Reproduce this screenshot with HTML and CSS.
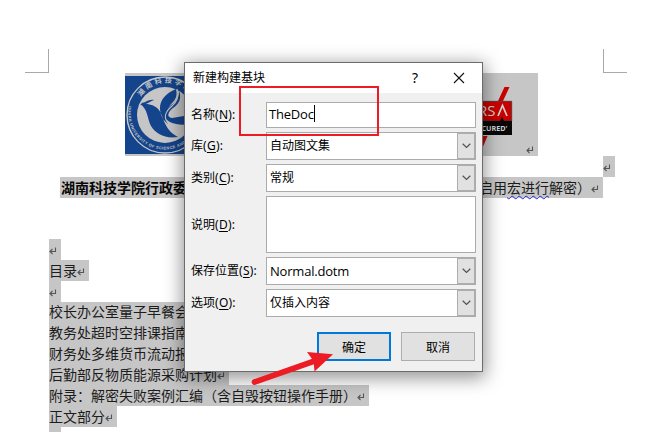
FILE: index.html
```html
<!DOCTYPE html>
<html lang="zh-CN">
<head>
<meta charset="utf-8">
<title>新建构建基块</title>
<link rel="stylesheet" href="styles.css">
</head>
<body>
<svg width="0" height="0" class="defs"><defs>
  <symbol id="ret" viewBox="0 0 8 8"><path d="M6.5 .5V4.5H1.5M3.5 2L1 4.500L3.5 7" fill="none" stroke="#555" stroke-width="1.100"/></symbol>
  <symbol id="chev" viewBox="0 0 9 6"><path d="M.7 .8L4.5 4.5L8.3 .8" fill="none" stroke="#505050" stroke-width="1.2"/></symbol>
</defs></svg>
<main class="page">
  <div class="corners"><i class="corner left"></i><i class="corner right"></i></div>
  <div class="logos">
    <svg class="seal" width="80" height="78" viewBox="125 76 80 78">
      <path fill="#14448b" d="M125 76h80v78h-80z"/>
      <circle cx="165" cy="115" r="38" fill="none" stroke="#c6c6c6" stroke-width="1.4"/>
      <circle cx="165" cy="115" r="28" fill="#c6c6c6"/>
      <path id="arcTop" d="M141 97A30 30 0 0 1 192 97" fill="none"/>
      <path id="arcBottom" d="M128.800 106A36.500 36.500 0 0 0 200 122" fill="none"/>
      <text class="seal-cn"><textPath href="#arcTop">湖南科技学院</textPath></text>
      <text class="seal-en"><textPath href="#arcBottom">HUNAN UNIVERSITY OF SCIENCE AND</textPath></text>
      <path fill="#14448b" d="M140 104C148 103 155 105 159 110C164 117 164 130 178 137C165 139 156 134 151 126C147 118 148 109 140 104zM141 103C146 103 148 99 154 100C149 102 147 104 143 105zM176 89C166 93 160 100 160 108C160 116 164 121 168 124C164 115 166 109 173 102C177 98 177 93 176 89z"/>
      <path fill="#14448b" d="M179 91C182 98 179 104 173 108C168 112 166 117 172 118L190 115L188 124C180 126 170 123 167 120C162 112 168 107 174 103C178 100 179 96 179 91z"/>
      <path d="M177 89C179 96 178 101 172 106C165 112 163 117 168 123" fill="none" stroke="#c6c6c6" stroke-width="1.2"/>
      <path d="M149 140q6 3 11 3m10 0q6 0 11-3M161 144h8" fill="none" stroke="#14448b" stroke-width=".9"/>
    </svg>
    <svg class="rsa" width="54" height="64" viewBox="460 86 54 64">
      <path fill="#c90000" d="M504.500 87h5L503 101h-5zM483 136h4.500L482 149h-5z"/>
      <path fill="#c90000" stroke="#333" stroke-width=".7" d="M461 101.300h50.700V121H461z"/>
      <path fill="#080808" d="M461 121h39l2-4 2 4h8v14h-51z"/>
      <text x="478" y="116" class="rsa-name">RS</text>
      <path d="M498 116L502.500 105.500L507 116" fill="none" stroke="#d0d0d0" stroke-width="1.700"/>
      <text x="473.500" y="130.800" class="rsa-sub">SECURED'</text>
    </svg>
    <svg class="ret"><use href="#ret"/></svg>
  </div>
  <div class="line tail"><svg class="ret"><use href="#ret"/></svg></div>
  <div class="line heading"><b>湖南科技学院行政委</b><span class="rest">启用<u>宏进行</u>解密）</span><svg class="ret"><use href="#ret"/></svg></div>
  <section class="body">
    <p class="line"><svg class="ret"><use href="#ret"/></svg></p>
    <p class="line">目录<svg class="ret"><use href="#ret"/></svg></p>
    <p class="line"><svg class="ret"><use href="#ret"/></svg></p>
    <p class="line">校长办公室量子早餐会<svg class="ret"><use href="#ret"/></svg></p>
    <p class="line">教务处超时空排课指南<svg class="ret"><use href="#ret"/></svg></p>
    <p class="line">财务处多维货币流动报<svg class="ret"><use href="#ret"/></svg></p>
    <p class="line">后勤部反物质能源采购计划<svg class="ret"><use href="#ret"/></svg></p>
    <p class="line">附录：解密失败案例汇编（含自毁按钮操作手册）<svg class="ret"><use href="#ret"/></svg></p>
    <p class="line">正文部分<svg class="ret"><use href="#ret"/></svg></p>
    <p class="line"><svg class="ret"><use href="#ret"/></svg></p>
  </section>
</main>

<div class="dialog">
  <header class="title"><span>新建构建基块</span><span class="help">?</span>
    <svg class="close" width="12" height="12" viewBox="0 0 12 12"><path d="M1 1L11 11M11 1L1 11" stroke="#111" stroke-width="1.100"/></svg>
  </header>
  <div class="form">
    <label>名称<span>(<u>N</u>):</span></label><div class="field name"><span class="typed">TheDoc</span><i class="caret"></i></div>
    <label>库<span>(<u>G</u>):</span></label><div class="field select"><span>自动图文集</span><i class="drop"><svg><use href="#chev"/></svg></i></div>
    <label>类别<span>(<u>C</u>):</span></label><div class="field select"><span>常规</span><i class="drop"><svg><use href="#chev"/></svg></i></div>
    <label>说明<span>(<u>D</u>):</span></label><div class="field"></div>
    <label>保存位置<span>(<u>S</u>):</span></label><div class="field select"><span class="latin">Normal.dotm</span><i class="drop"><svg><use href="#chev"/></svg></i></div>
    <label>选项<span>(<u>O</u>):</span></label><div class="field select"><span>仅插入内容</span><i class="drop"><svg><use href="#chev"/></svg></i></div>
  </div>
  <footer class="actions"><button class="primary">确定</button><button>取消</button></footer>
</div>
<div class="highlight"></div>
<svg class="arrow" width="86" height="40" viewBox="250 348 86 40"><path d="M254.500 382L316 360.500" stroke="#ed1c24" stroke-width="5.600" stroke-linecap="round"/><path fill="#ed1c24" d="M307 352L333 354.300L314.500 371.500L313.500 361z"/></svg>
</body>
</html>
```
FILE: styles.css
```css
* { box-sizing: border-box; }
body { margin: 0; width: 654px; height: 432px; overflow: hidden; position: relative; background: #fff; color: #000; font-family: "Noto Sans", "Noto Sans CJK SC", sans-serif; }
.defs { position: absolute; }
i { font-style: normal; }
.page { padding: 49px 27px 0 25px; height: 432px; overflow: hidden; font: 14px/21px "Noto Sans CJK SC", sans-serif; color: #1c1c1c; }
.corners { display: flex; justify-content: space-between; height: 24px; }
.corner { width: 24px; height: 24px; border-bottom: 1px solid #a9a9a9; }
.left { border-right: 1px solid #a9a9a9; }
.right { border-left: 1px solid #a9a9a9; }
.logos { display: flex; justify-content: space-between; margin-left: 100px; width: 413px; height: 83px; background: #c6c6c6; padding-top: 3px; }
.rsa { margin: 10px 0 0 auto; }
.logos .ret { align-self: flex-end; margin: 0 4px 2px 12px; }
.ret { width: 8px; height: 8px; flex: none; }
.seal-cn { font: bold 7px "Noto Sans CJK SC", sans-serif; fill: #c6c6c6; letter-spacing: 2.5px; }
.seal-en { font: bold 4px "Liberation Sans", sans-serif; fill: #c6c6c6; letter-spacing: .4px; }
.rsa-name { font: 15px "Open Sans", sans-serif; fill: #d0d0d0; }
.rsa-sub { font: bold 7.2px "Open Sans", sans-serif; fill: #d0d0d0; }
.line { display: flex; align-items: center; height: 21px; width: max-content; background: #c6c6c6; margin: 0; white-space: nowrap; }
.line .ret { margin: 3px 4px 0 0; }
.tail { margin-left: 578px; }
.heading { width: 543px; margin-left: 35px; padding-left: 1px; }
.heading b { font-weight: 700; color: #080808; }
.heading .rest { margin-left: auto; }
.rest u { text-decoration: underline wavy #2424e0 1px; text-underline-offset: 2px; }
.body { margin: 41px 0 0 24px; }
.body .line { height: 20.85px; }

.dialog { position: absolute; left: 184px; top: 62px; width: 299px; height: 310px; border: 1px solid #6b6b6b; background: #f0f0f0; box-shadow: 0 4px 17px 2px rgba(0,0,0,.42); font-size: 12px; }
.title { display: flex; align-items: center; height: 30px; padding: 0 17px 2px 8px; background: #fff; }
.help { margin-left: auto; font-size: 14px; }
.close { margin: 2px 0 0 35px; }
.form { display: grid; grid-template-columns: 75px 210px; grid-template-rows: 26px 28px 28px 57px 28px 28px; row-gap: 4px; padding: 9px 0 0 6px; }
.form label { align-self: center; white-space: nowrap; padding-bottom: 2px; }
.form label span { letter-spacing: .25px; }
.form label u { text-underline-offset: 2px; text-decoration-thickness: 1px; }
.field { display: flex; align-items: center; background: #fff; border: 1px solid #ababab; padding-left: 3px; line-height: 18px; }
.name { padding-left: 2px; }
.typed { font: 13px/18px "Open Sans", sans-serif; letter-spacing: -.2px; margin-top: -3px; }
.caret { width: 1px; height: 17px; background: #000; margin-top: -3px; }
.latin { font: 13px/18px "Open Sans", sans-serif; letter-spacing: -.2px; }
.drop { display: flex; align-items: center; justify-content: center; margin-left: auto; width: 18px; height: 100%; background: #e1e1e1; border: 1px solid #adadad; }
.drop svg { width: 9px; height: 6px; }
.actions { display: flex; gap: 10px; padding: 15px 0 0 132px; }
button { width: 74px; height: 29px; padding: 0; border: 1px solid #adadad; background: #e1e1e1; color: #000; font: 12px "Noto Sans CJK SC", sans-serif; }
.primary { border: 2px solid #0078d7; }
.highlight { position: absolute; left: 239px; top: 86px; width: 140px; height: 50px; border: 2px solid #ed1c24; }
.arrow { position: absolute; left: 250px; top: 348px; }
```
